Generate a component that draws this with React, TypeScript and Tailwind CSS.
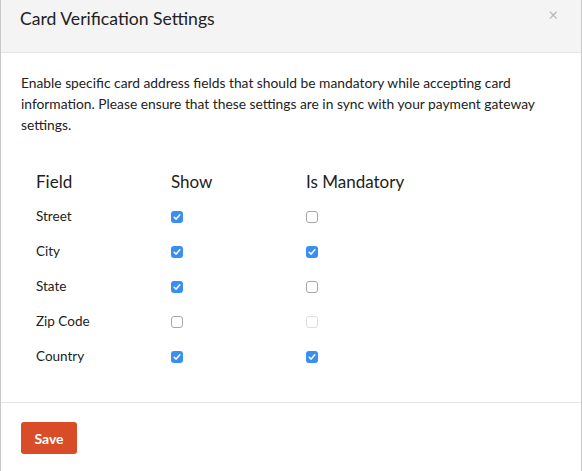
type Row = { name: string; show: boolean; mandatory: boolean; disabled?: boolean };

const rows: Row[] = [
  { name: "Street", show: true, mandatory: false },
  { name: "City", show: true, mandatory: true },
  { name: "State", show: true, mandatory: false },
  { name: "Zip Code", show: false, mandatory: false, disabled: true },
  { name: "Country", show: true, mandatory: true },
];

function Check({ on, disabled }: { on: boolean; disabled?: boolean }) {
  if (on) {
    return (
      <span className="flex h-[12px] w-[12px] items-center justify-center rounded-[3px] bg-[#3b8ef1]">
        <svg viewBox="0 0 12 12" className="h-[10px] w-[10px]">
          <path d="M2.6 6.3 L5 8.5 L9.4 3.4" fill="none" stroke="white" strokeWidth="1.8" strokeLinecap="round" strokeLinejoin="round" />
        </svg>
      </span>
    );
  }
  return (
    <span
      className={
        disabled
          ? "block h-[12px] w-[12px] rounded-[3px] border border-[#dcdcdc] bg-white"
          : "block h-[12px] w-[12px] rounded-[3px] border border-[#a6a6a6] bg-white"
      }
    />
  );
}

export default function App() {
  return (
    <div
      className="flex h-[471px] w-[582px] flex-col border-x border-[#c8c8c8] bg-white text-[#222]"
      style={{ fontFamily: "Lato, 'Open Sans', sans-serif" }}
    >
      {/* header */}
      <div className="relative h-[53px] shrink-0 border-b border-[#e6e6e6] bg-[#f4f4f4] pl-[19px] pt-[9px]">
        <h1 className="text-[17.6px] leading-[20px] text-[#222]">Card Verification Settings</h1>
        <span className="absolute right-[23px] top-[5px] text-[17px] leading-[20px] text-[#b8b8b8]">×</span>
      </div>

      {/* body */}
      <div className="flex-1 px-[20px] pt-[19px]">
        <p className="text-[13.8px] leading-[21px] text-[#222]">
          Enable specific card address fields that should be mandatory while accepting card
          <br />
          information. Please ensure that these settings are in sync with your payment gateway
          <br />
          settings.
        </p>

        <div className="mt-[29px] pl-[15px]">
          <div className="grid h-[35px] grid-cols-[135px_135px_1fr] items-center text-[17px]">
            <span>Field</span>
            <span>Show</span>
            <span>Is Mandatory</span>
          </div>
          {rows.map((r) => (
            <div key={r.name} className="grid h-[35px] grid-cols-[135px_135px_1fr] items-center text-[13.5px]">
              <span>{r.name}</span>
              <Check on={r.show} />
              <Check on={r.mandatory} disabled={r.disabled} />
            </div>
          ))}
        </div>
      </div>

      {/* footer */}
      <div className="h-[69px] shrink-0 border-t border-[#e6e6e6] px-[20px] pt-[19px]">
        <button className="h-[32px] w-[56px] rounded-[3px] bg-[#d84c27] text-[14px] font-bold text-white">
          Save
        </button>
      </div>
    </div>
  );
}
